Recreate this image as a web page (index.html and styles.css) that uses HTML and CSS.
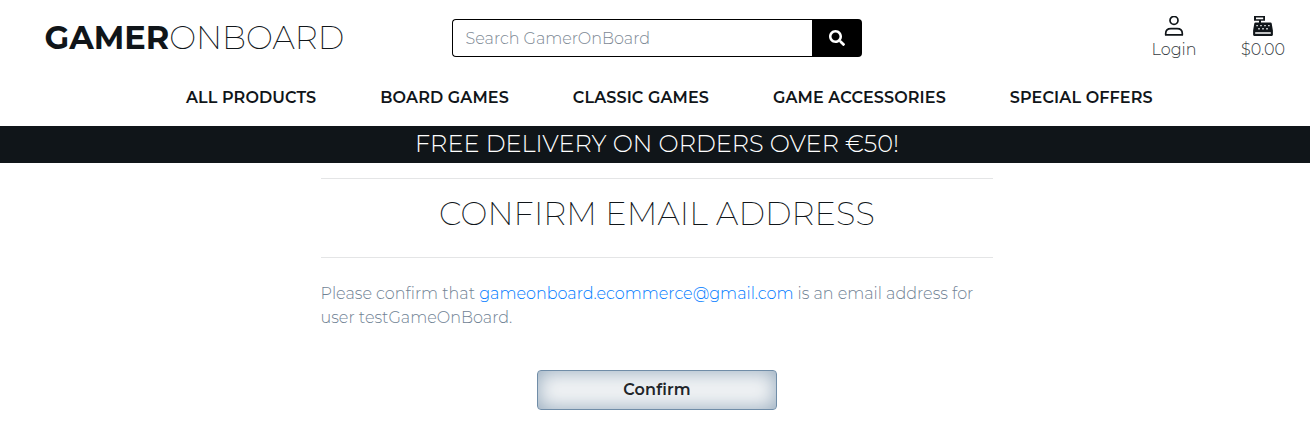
FILE: index.html
```html
<!DOCTYPE html>
<html lang="en">
<head>
<meta charset="utf-8">
<title>GamerOnBoard</title>
<link rel="stylesheet" href="styles.css">
</head>
<body>
<header class="top">
  <a class="logo"><strong class="logo-bold">GAMER</strong><span class="logo-thin">ONBOARD</span></a>
  <form class="search">
    <input class="search-input" type="text" placeholder="Search GamerOnBoard">
    <button class="search-button" type="button" aria-label="Search">
      <svg width="16" height="16" viewBox="0 0 512 512" fill="currentColor"><path d="M505 442.700 405.300 343c-4.500-4.500-10.600-7-17-7H372c27.600-35.300 44-79.700 44-128C416 93.100 322.900 0 208 0S0 93.100 0 208s93.100 208 208 208c48.300 0 92.700-16.400 128-44v16.300c0 6.400 2.500 12.500 7 17l99.700 99.700c9.400 9.400 24.600 9.400 33.900 0l28.300-28.300c9.400-9.400 9.400-24.600.1-34zM208 336c-70.700 0-128-57.200-128-128 0-70.700 57.200-128 128-128 70.700 0 128 57.200 128 128 0 70.700-57.200 128-128 128z"/></svg>
    </button>
  </form>
  <div class="account">
    <a class="account-item">
      <svg class="icon" width="20" height="20" viewBox="0 0 20 20" fill="none" stroke="currentColor" stroke-width="1.700"><circle cx="10" cy="4.400" r="4"/><path d="M1.700 18.900v-1.300c0-3 2.200-4.900 5.200-4.900h6.200c3 0 5.200 1.900 5.200 4.900v1.300z" stroke-linejoin="round"/></svg>
      <span class="label">Login</span>
    </a>
    <a class="account-item">
      <svg class="icon" width="20" height="20" viewBox="0 0 20 20"><path fill="currentColor" fill-rule="evenodd" d="M1 0h11v4.800H8v1.700h9.500c.7 0 1.100.4 1.200 1l1.200 7v4.300c0 .7-.5 1.200-1.200 1.200H1.300c-.7 0-1.200-.5-1.200-1.200v-4.300l1.200-7c.1-.6.500-1 1.200-1H6V4.800H1zM3 1.600v1.600h7.200V1.600zM3.400 9v1.300h1.400V9zM7.300 9v1.300h1.400V9zM11.300 9v1.300h1.400V9zM15.200 9v1.300h1.400V9zM5.300 12v1.400h1.400V12zM9.300 12v1.400h1.400V12zM13.300 12v1.400h1.400V12zM2.200 16.300v1.500h15.600v-1.500z"/></svg>
      <span class="label">$0.00</span>
    </a>
  </div>
</header>
<nav class="menu">
  <a class="link">ALL PRODUCTS</a>
  <a class="link">BOARD GAMES</a>
  <a class="link">CLASSIC GAMES</a>
  <a class="link">GAME ACCESSORIES</a>
  <a class="link">SPECIAL OFFERS</a>
</nav>
<div class="banner">FREE DELIVERY ON ORDERS OVER €50!</div>
<main class="content">
  <h1 class="title">CONFIRM EMAIL ADDRESS</h1>
  <p class="message"><span>Please confirm that</span> <a class="email">gameonboard.ecommerce@gmail.com</a> <span>is an email address for</span><br><span>user testGameOnBoard.</span></p>
  <button class="confirm" type="button">Confirm</button>
</main>
</body>
</html>
```
FILE: styles.css
```css
* { box-sizing: border-box; }
body {
  margin: 0;
  background: #fff;
  color: #101519;
  font-family: Montserrat, Inter, sans-serif;
  font-size: 16px;
  font-weight: 300;
  line-height: 24px;
}
.top {
  display: flex;
  align-items: flex-start;
  height: 78px;
  padding: 0 24.500px 0 44.500px;
}
.logo {
  width: 407.500px;
  padding-top: 14px;
  font-size: 32px;
  line-height: 48px;
  white-space: nowrap;
}
.logo-bold { font-weight: 700; }
.logo-thin { font-weight: 200; }
.search {
  display: flex;
  width: 410px;
  height: 38px;
  margin-top: 19px;
}
.search-input {
  width: 360px;
  padding: 2px 12px 0 12.500px;
  border: 1px solid #000;
  border-right: 0;
  border-radius: 4px 0 0 4px;
  background: #fff;
  font: inherit;
}
.search-input::placeholder { color: #7d8894; opacity: 1; }
.search-button {
  display: flex;
  align-items: center;
  justify-content: center;
  width: 50px;
  padding: 0;
  border: 0;
  border-radius: 0 4px 4px 0;
  background: #000;
  color: #fff;
}
.account {
  display: flex;
  gap: 44px;
  margin-left: auto;
  padding-top: 16px;
}
.account-item {
  display: flex;
  flex-direction: column;
  align-items: center;
  width: 45px;
}
.icon {
  display: block;
  margin-right: 1px;
}
.label {
  margin-top: 2px;
  color: #343a40;
}
.menu {
  display: flex;
  gap: 64px;
  height: 48px;
  padding: 8px 0 0 186px;
  font-weight: 600;
  letter-spacing: 0.120px;
  white-space: nowrap;
}
.banner {
  height: 37px;
  padding-left: 4px;
  background: #101519;
  color: #fff;
  font-size: 24px;
  line-height: 36px;
  text-align: center;
}
.content {
  display: flex;
  flex-direction: column;
  width: 672px;
  margin: 15px 0 0 321px;
}
.title {
  height: 80px;
  margin: 0;
  border-top: 1px solid #e4e5e6;
  border-bottom: 1px solid #e4e5e6;
  font-size: 32px;
  font-weight: 200;
  letter-spacing: 0.100px;
  line-height: 70px;
  text-align: center;
}
.message {
  margin: 24px 0 0 -0.500px;
  color: #708294;
  white-space: nowrap;
}
.email { color: #007bff; }
.confirm {
  align-self: center;
  width: 240px;
  height: 40px;
  margin-top: 40px;
  border: 1px solid #708da8;
  border-radius: 4px;
  background: #f1f3f5;
  box-shadow: inset 0 0 20px #93a8bb;
  color: #212529;
  font: inherit;
  font-weight: 600;
  letter-spacing: 0.150px;
}
```
